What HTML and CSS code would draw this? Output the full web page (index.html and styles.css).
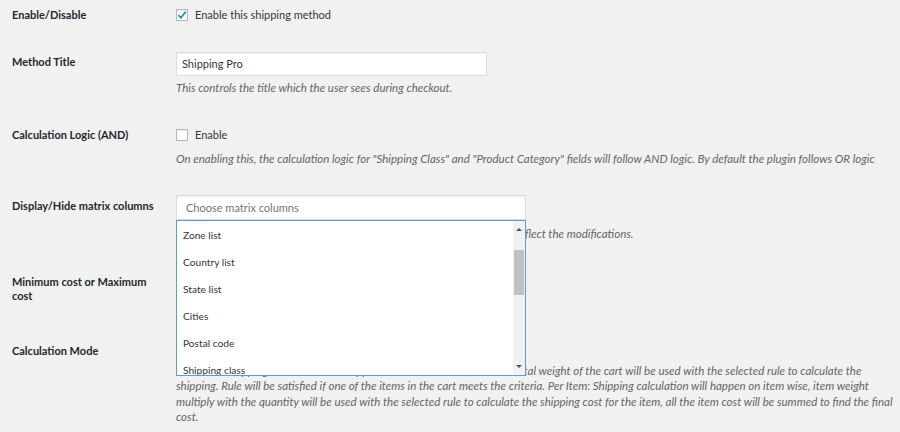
FILE: index.html
```html
<!DOCTYPE html>
<html lang="en">
<head>
    <meta charset="UTF-8">
    <title>Shipping Pro settings</title>
    <link rel="stylesheet" href="styles.css">
</head>
<body>
    <div class="settings">
        <div class="row row-enable">
            <div class="label">Enable/Disable</div>
            <div class="field">
                <label class="check">
                    <span class="box">
                        <svg width="10" height="10" viewBox="0 0 10 10"><path d="M1.3 5.2 L3.9 7.8 L8.8 1.6" fill="none" stroke="#1e8cbe" stroke-width="1.7"/></svg>
                    </span>
                    Enable this shipping method
                </label>
            </div>
        </div>

        <div class="row row-title">
            <div class="label">Method Title</div>
            <div class="field">
                <div class="input title-input">Shipping Pro</div>
                <p class="desc">This controls the title which the user sees during checkout.</p>
            </div>
        </div>

        <div class="row row-logic">
            <div class="label">Calculation Logic (AND)</div>
            <div class="field">
                <label class="check"><span class="box"></span>Enable</label>
                <p class="desc">On enabling this, the calculation logic for "Shipping Class" and "Product Category" fields will follow AND logic. By default the plugin follows OR logic</p>
            </div>
        </div>

        <div class="row row-columns">
            <div class="label">Display/Hide matrix columns</div>
            <div class="field">
                <div class="select-wrap">
                    <div class="input matrix-input placeholder">Choose matrix columns</div>
                    <div class="dropdown">
                        <ul class="options">
                            <li>Zone list</li>
                            <li>Country list</li>
                            <li>State list</li>
                            <li>Cities</li>
                            <li>Postal code</li>
                            <li>Shipping class</li>
                            <li>Product category</li>
                        </ul>
                        <div class="scrollbar">
                            <div class="arrow"><span class="up"></span></div>
                            <div class="track"><div class="thumb"></div></div>
                            <div class="arrow"><span class="down"></span></div>
                        </div>
                    </div>
                </div>
                <p class="desc">Select the columns to be listed in the rate matrix. Save these settings to reflect the modifications.</p>
            </div>
        </div>

        <div class="row row-cost">
            <div class="label">Minimum cost or Maximum cost</div>
            <div class="field">
                <div class="input small-select">Maximum cost</div>
            </div>
        </div>

        <div class="row row-mode">
            <div class="label">Calculation Mode</div>
            <div class="field">
                <div class="input mode-select">Per Order</div>
                <p class="desc long">Per Order: Shipping calculation will happen on cart wise basis, here the total weight of the cart will be used with the selected rule to calculate the shipping. Rule will be satisfied if one of the items in the cart meets the criteria. Per Item: Shipping calculation will happen on item wise, item weight multiply with the quantity will be used with the selected rule to calculate the shipping cost for the item, all the item cost will be summed to find the final cost.</p>
            </div>
        </div>
    </div>
</body>
</html>
```

FILE: styles.css
```css
body {
    margin: 0;
    background: #f1f1f1;
    font-family: Lato, "Liberation Sans", sans-serif;
    font-size: 11px;
    line-height: 14px;
    color: #32373c;
}

.settings {
    padding: 8px 0 0 12px;
}

.row {
    display: grid;
    grid-template-columns: 164px 1fr;
}

.label {
    width: 145px;
    font-weight: bold;
    color: #23282d;
}

.field {
    position: relative;
}

/* row spacing */
.row-title { margin-top: 30px; }
.row-title .label { padding-top: 3px; }
.row-logic { margin-top: 33px; }
.row-columns { margin-top: 29px; }
.row-columns .label { padding-top: 4px; }
.row-cost { margin-top: 30px; }
.row-cost .label { padding-top: 4px; }
.row-mode { margin-top: 35px; }
.row-mode .label { padding-top: 6px; }

.check {
    display: flex;
    align-items: center;
    gap: 7px;
    color: #32373c;
}

.box {
    width: 12px;
    height: 12px;
    box-sizing: border-box;
    border: 1px solid #b4b9be;
    background: #fff;
    box-shadow: inset 0 1px 2px rgba(0, 0, 0, .1);
    display: flex;
    align-items: center;
    justify-content: center;
}

.input {
    box-sizing: border-box;
    background: #fff;
    border: 1px solid #ddd;
    box-shadow: inset 0 1px 2px rgba(0, 0, 0, .07);
    padding: 0 5px;
    display: flex;
    align-items: center;
}

.title-input {
    width: 311px;
    height: 24px;
}

.matrix-input {
    width: 350px;
    height: 25px;
    padding-left: 9px;
}

.placeholder {
    color: #72777c;
}

.small-select {
    width: 300px;
    height: 25px;
}

.mode-select {
    width: 300px;
    height: 24px;
}

.desc {
    margin: 5px 0 0;
    font-size: 11.5px;
    font-style: italic;
    color: #666;
    max-width: 718px;
}

.row-logic .desc { margin-top: 10px; }
.row-columns .desc { margin-top: 7px; }
.row-mode .desc {
    margin-top: 1px;
    line-height: 15.4px;
    max-width: 717px;
}

.select-wrap {
    position: relative;
    width: 350px;
}

.dropdown {
    position: absolute;
    top: 100%;
    left: 0;
    z-index: 10;
    width: 350px;
    height: 156px;
    box-sizing: border-box;
    border: 1px solid #5b9dd9;
    background: #fff;
    display: flex;
}

.options {
    flex: 1;
    list-style: none;
    margin: 0;
    padding: 1px 0 0;
    overflow: hidden;
}

.options li {
    padding: 6px 6px;
    font-size: 10.2px;
    line-height: 15px;
    color: #32373c;
}

.scrollbar {
    width: 12px;
    background: #f1f1f1;
    display: flex;
    flex-direction: column;
}

.arrow {
    height: 17px;
    display: flex;
    align-items: center;
    justify-content: center;
}

.up,
.down {
    width: 0;
    height: 0;
    border-left: 3px solid transparent;
    border-right: 3px solid transparent;
}

.up { border-bottom: 3px solid #505050; }
.down { border-top: 3px solid #505050; }

.track {
    flex: 1;
    padding: 12px 1px 0;
}

.thumb {
    height: 45px;
    background: #c1c1c1;
}
```
